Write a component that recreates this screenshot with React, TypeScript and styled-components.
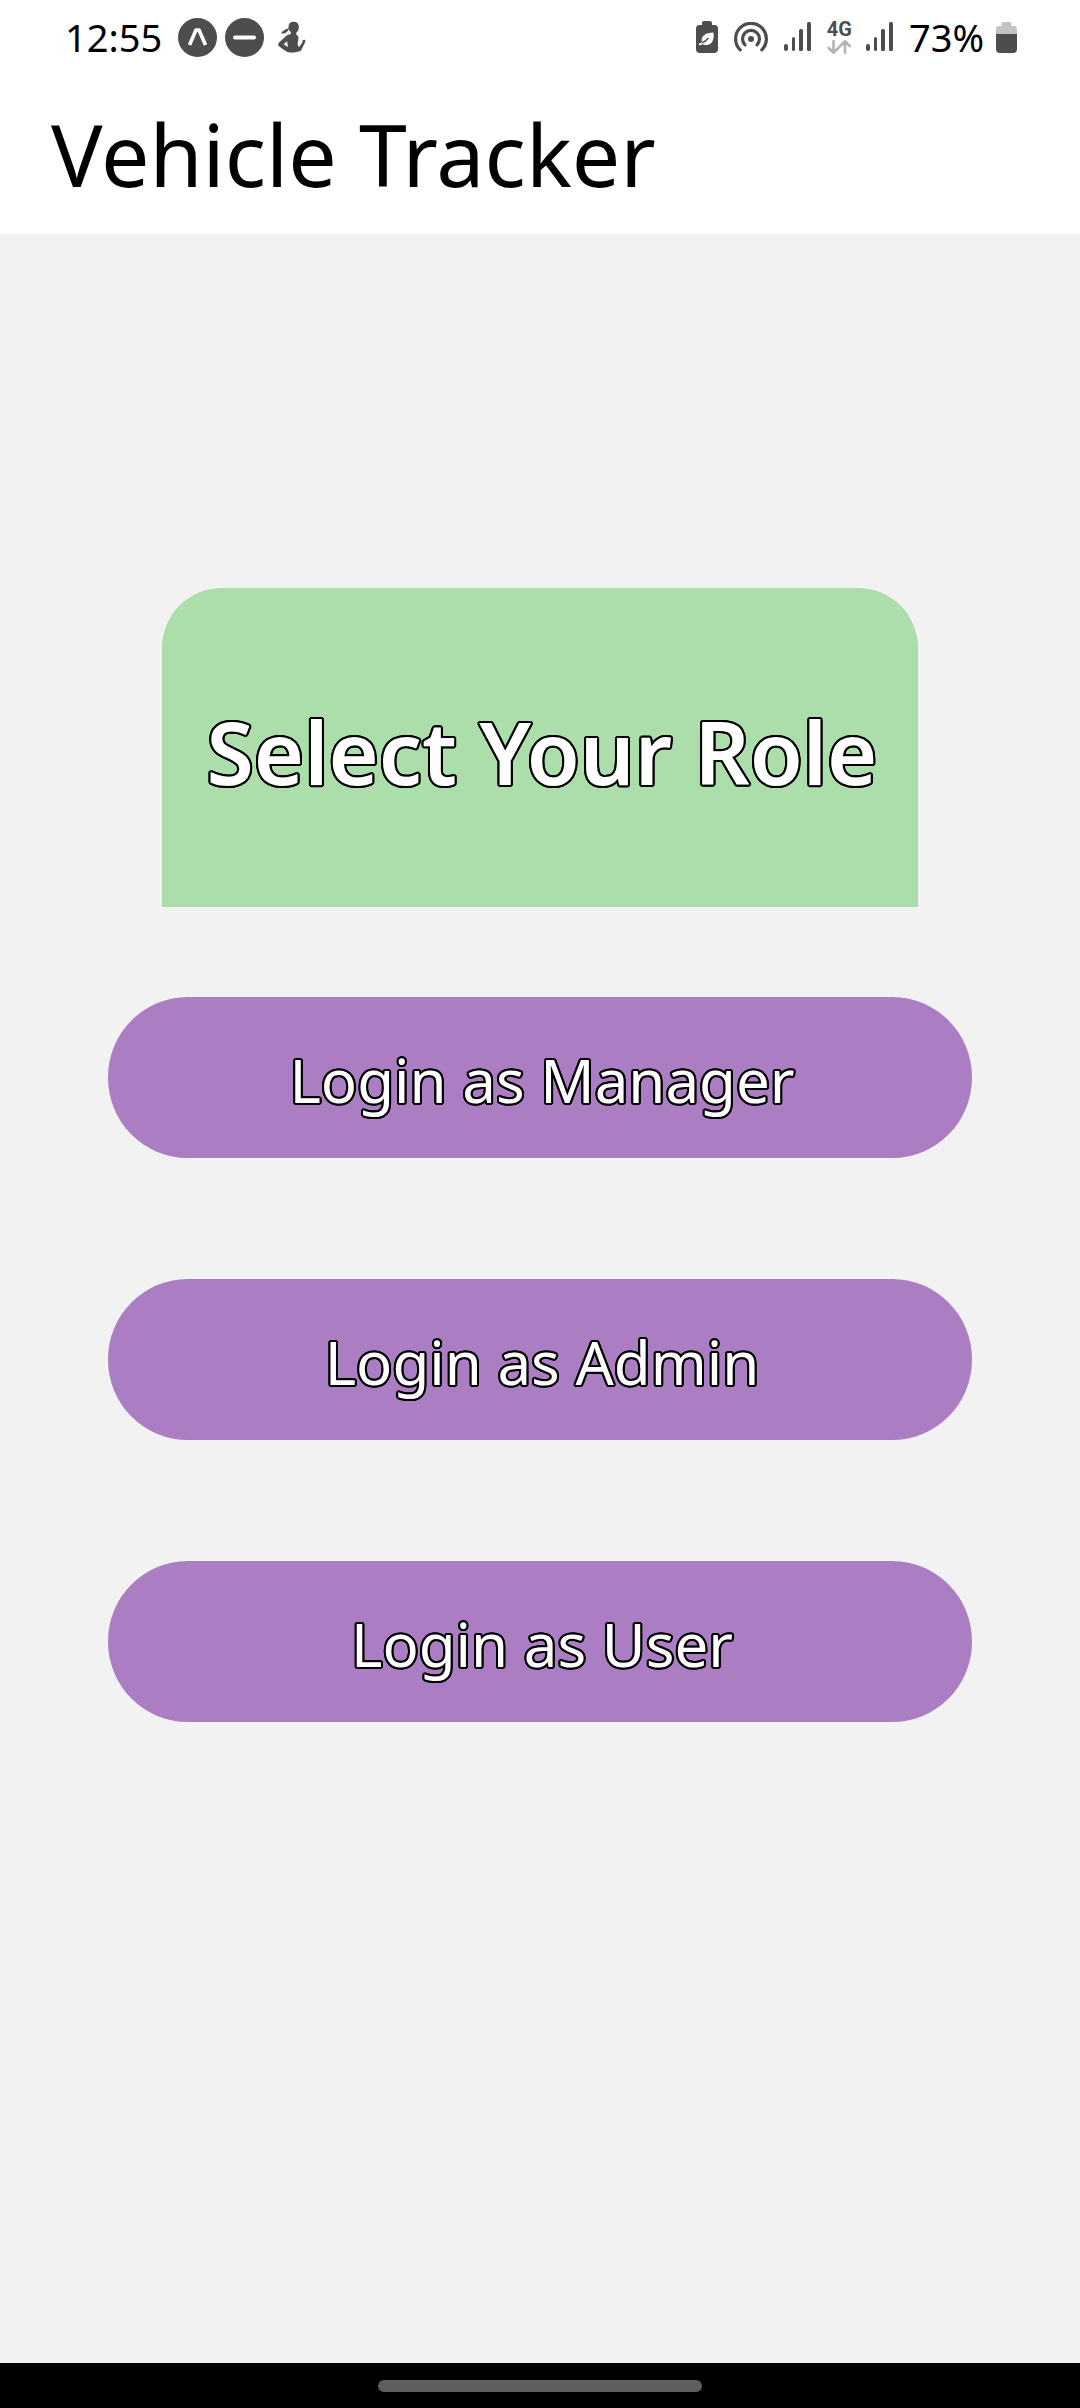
import React from "react";
import styled, { createGlobalStyle, css } from "styled-components";

const GlobalStyle = createGlobalStyle`
  *, *::before, *::after { box-sizing: border-box; }
  body { margin: 0; background: #f2f2f2; font-family: "Noto Sans", sans-serif; }
`;

const outlined = css`
  color: #fff;
  text-shadow: 2px 0 #000, -2px 0 #000, 0 2px #000, 0 -2px #000,
    1px 2px #000, -1px 2px #000, 1px -2px #000, -1px -2px #000,
    2px 1px #000, -2px 1px #000, 2px -1px #000, -2px -1px #000;
`;

const Screen = styled.div`
  display: flex;
  flex-direction: column;
  min-height: 100vh;
  background: #f2f2f2;
`;

const StatusBar = styled.div`
  display: flex;
  align-items: center;
  justify-content: space-between;
  height: 74px;
  padding: 0 63px 0 65px;
  background: #fff;
  color: #000;
`;

const StatusGroup = styled.div<{ $gap: number }>`
  display: flex;
  align-items: center;
  gap: ${(p) => p.$gap}px;
`;

const StatusText = styled.span`
  font-size: 38px;
  line-height: 48px;
`;

const Glyph = styled.svg`
  display: block;
  flex: none;
  color: #4d4d4d;
`;

const Network = styled.div`
  display: flex;
  flex-direction: column;
  align-items: center;
  gap: 3px;
`;

const NetworkLabel = styled.span`
  font-family: Roboto, sans-serif;
  font-size: 20px;
  font-weight: 700;
  line-height: 16px;
  color: #4d4d4d;
`;

const TitleBar = styled.header`
  display: flex;
  align-items: center;
  height: 160px;
  padding: 0 51px;
  background: #fff;
`;

const AppTitle = styled.h1`
  margin: 0;
  font-size: 86px;
  font-weight: 400;
  line-height: 120px;
  color: #000;
`;

const Main = styled.main`
  display: flex;
  flex: 1;
  flex-direction: column;
  align-items: center;
  padding-top: 354px;
`;

const RoleCard = styled.section`
  display: flex;
  align-items: center;
  justify-content: center;
  width: 70%;
  height: 319px;
  border-radius: 60px 60px 0 0;
  background: #abdeab;
`;

const Heading = styled.h2`
  margin: 0;
  padding: 8px 0 0 4px;
  font-size: 86px;
  font-weight: 600;
  line-height: 120px;
  white-space: nowrap;
  ${outlined}
`;

const RoleList = styled.nav`
  display: flex;
  flex-direction: column;
  gap: 121px;
  width: 80%;
  margin-top: 90px;
`;

const RoleButton = styled.button`
  width: 100%;
  height: 161px;
  padding: 4px 0 0 4px;
  border: 0;
  border-radius: 80px;
  background: #ab7dc2;
  font: 400 60px/80px "Noto Sans", sans-serif;
  cursor: pointer;
  ${outlined}
`;

const GestureBar = styled.div`
  display: flex;
  align-items: center;
  justify-content: center;
  height: 45px;
  background: #000;
`;

const GesturePill = styled.div`
  width: 30%;
  height: 12px;
  border-radius: 6px;
  background: #5e5e5e;
`;

const ExpoIcon = () => (
  <Glyph width="39" height="39" viewBox="0 0 39 39" fill="currentColor">
    <circle cx="19.5" cy="19.5" r="19.5" />
    <path d="M11.5 27 18 12h3l6.500 15" fill="none" stroke="#fff" strokeWidth="3.600" strokeLinejoin="round" />
  </Glyph>
);

const MinusIcon = () => (
  <Glyph width="39" height="39" viewBox="0 0 39 39" fill="currentColor">
    <circle cx="19.500" cy="19.500" r="19.500" />
    <path d="M10 19.500h19" stroke="#fff" strokeWidth="4" strokeLinecap="round" />
  </Glyph>
);

const FigureIcon = () => (
  <Glyph width="29" height="32" viewBox="0 0 29 32" fill="currentColor">
    <path d="M10.500 5.500a5.200 5.200 0 0 1 10.300-.4c.2 1.600-.2 3.600-.9 5l-1.500 1.400-.2 2c1.800.8 2.500 2.500 2.200 4.600l-.9 5.200 1.500 2.900 3.300-4.700.3-2.300 2.300-.4c.6.600.5 1.600.3 2.300l-4 8.200c-.6 1-1.700 1.200-2.700 1.200l-2 .5c-3.500.7-6.700.7-9 0C6 29 2.300 26.500.3 24.500c-.5-1 0-2 .8-3l7-6.500c1.300-1 3-1.500 4.500-2l.5-1.800c-1.400-1-2.200-2-2.500-3.300-.7 2.700-3.300 5.300-7.600 4.600C4.700 9.700 7.500 8 10.500 7.500zM5.500 23.600l4.500 2.500-1-6z" />
  </Glyph>
);

const EcoBatteryIcon = () => (
  <Glyph width="22" height="32" viewBox="0 0 22 32" fill="currentColor">
    <path d="M8 0h6q2 0 2 2v2h2.500Q22 4 22 7.500V28q0 4-4 4H4q-4 0-4-4V7.500Q0 4 3.500 4H6V2q0-2 2-2z" />
    <path d="M17.500 11.500c.8 6-.7 12-6.500 12.500-1.800.2-3.200-.2-4-1C5.800 24 4.500 24.400 3 24l-.2-1.500c1.700 0 2.600-.8 3.200-1.700C4.500 15.500 9 11.500 17.500 11.500z" fill="#fff" />
    <path d="M5.500 22c3-1 5-2.500 7-5" stroke="currentColor" strokeWidth="1.300" fill="none" />
  </Glyph>
);

const HotspotIcon = () => (
  <Glyph width="34" height="30" viewBox="0 0 34 30" fill="none" stroke="currentColor" strokeWidth="3.200" strokeLinecap="round">
    <path d="M6.200 27.800a15.400 15.400 0 1 1 21.600 0" />
    <path d="M11 22.800a8.500 8.500 0 1 1 12 0" />
    <circle cx="17" cy="17" r="3" fill="currentColor" stroke="none" />
  </Glyph>
);

const SignalIcon = () => (
  <Glyph width="27" height="30" viewBox="0 0 27 30" fill="currentColor">
    <rect x="0" y="22" width="4" height="7" rx="2" />
    <rect x="8" y="15" width="3" height="14" rx="1.500" />
    <rect x="15" y="7" width="4" height="22" rx="1.500" />
    <rect x="23" y="0" width="4" height="29" rx="1.500" />
  </Glyph>
);

const DataArrows = () => (
  <Glyph width="24" height="14" viewBox="0 0 24 14" fill="none" stroke="#b4b4b4" strokeWidth="2.600" strokeLinecap="round" strokeLinejoin="round">
    <path d="M6.500 1v11.500M1.500 7.800l5 4.900 5-4.900M18 13V1.500M13 6.200l5-4.900 5 4.900" />
  </Glyph>
);

const BatteryIcon = () => (
  <Glyph width="21" height="31" viewBox="0 0 21 31">
    <path d="M7.500 0h6q2 0 2 2v2H18q3 0 3 3v5H0V7q0-3 3-3h2.500V2q0-2 2-2z" fill="#c3c3c3" />
    <path d="M0 12h21v15q0 4-4 4H4q-4 0-4-4z" fill="currentColor" />
  </Glyph>
);

const roles = ["Manager", "Admin", "User"];

export default function App() {
  return (
    <>
      <GlobalStyle />
      <Screen>
        <StatusBar>
          <StatusGroup $gap={16}>
            <StatusText>12:55</StatusText>
            <StatusGroup $gap={14}>
              <StatusGroup $gap={8}>
                <ExpoIcon />
                <MinusIcon />
              </StatusGroup>
              <FigureIcon />
            </StatusGroup>
          </StatusGroup>
          <StatusGroup $gap={16}>
            <EcoBatteryIcon />
            <HotspotIcon />
            <SignalIcon />
            <StatusGroup $gap={14}>
              <Network>
                <NetworkLabel>4G</NetworkLabel>
                <DataArrows />
              </Network>
              <SignalIcon />
            </StatusGroup>
            <StatusGroup $gap={12}>
              <StatusText>73%</StatusText>
              <BatteryIcon />
            </StatusGroup>
          </StatusGroup>
        </StatusBar>
        <TitleBar>
          <AppTitle>Vehicle Tracker</AppTitle>
        </TitleBar>
        <Main>
          <RoleCard>
            <Heading>Select Your Role</Heading>
          </RoleCard>
          <RoleList>
            {roles.map((role) => (
              <RoleButton key={role} type="button">
                Login as {role}
              </RoleButton>
            ))}
          </RoleList>
        </Main>
        <GestureBar>
          <GesturePill />
        </GestureBar>
      </Screen>
    </>
  );
}
